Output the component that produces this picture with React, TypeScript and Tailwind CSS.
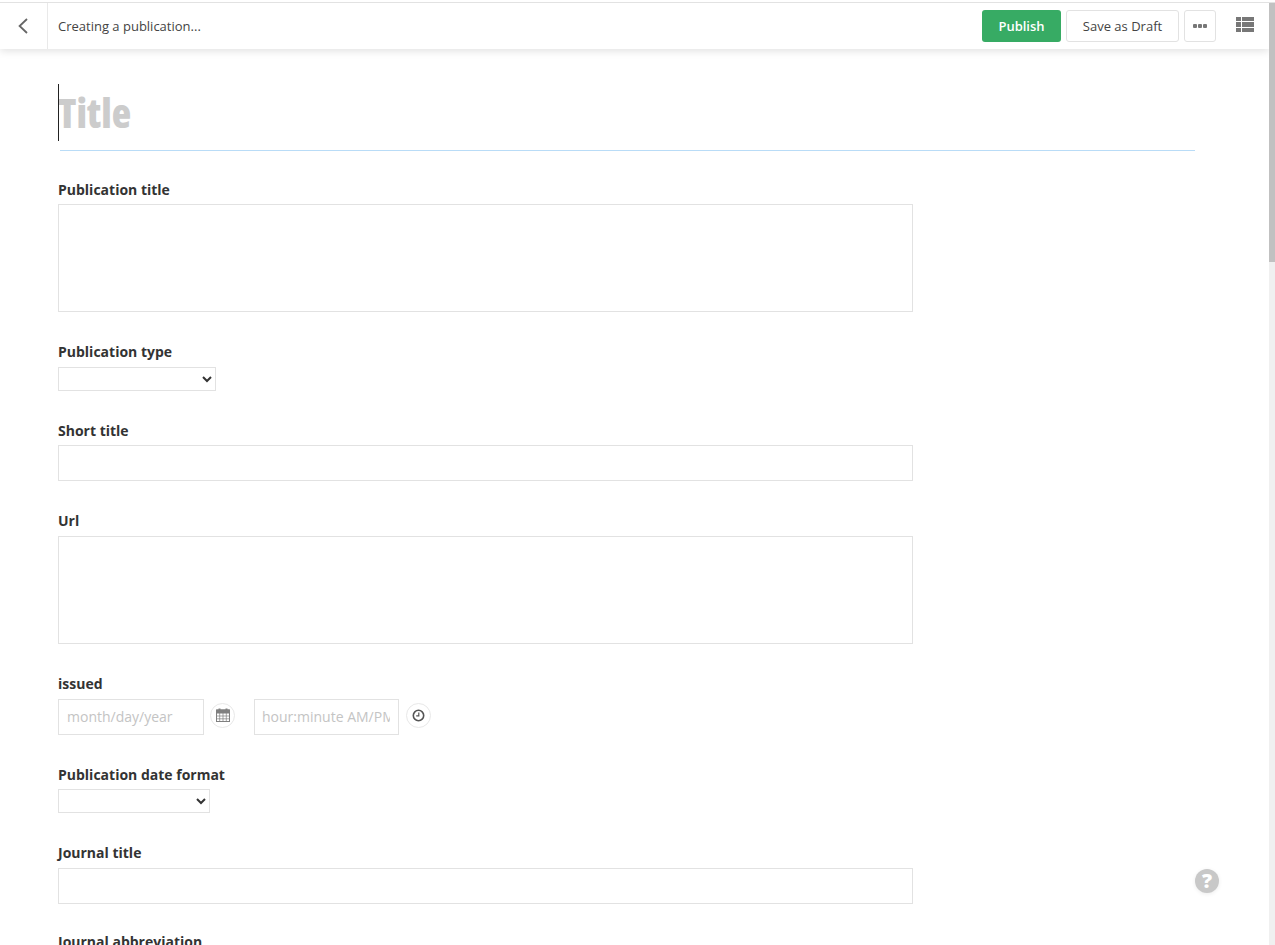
const boxBorder = "block border border-[#e2e2e2] bg-white";

function Label({ text, gap }: { text: string; gap: string }) {
  return <label className={`block h-5 text-[14px] leading-[22px] font-bold text-[#333] ${gap}`}>{text}</label>;
}

function Area() {
  return <textarea className={`${boxBorder} h-[108px] w-[855px] resize-none outline-none`} />;
}

function Line() {
  return <input className={`${boxBorder} h-9 w-[855px] outline-none`} />;
}

function Select({ width }: { width: string }) {
  return <select className={`block h-6 border border-[#e2e2e2] bg-white text-[13px] outline-none ${width}`} />;
}

function CalendarGlyph() {
  return (
    <svg className="mb-[2px]" width="14" height="14" viewBox="0 0 14 14" fill="none" stroke="#808080" strokeWidth="1">
      <rect x="0.5" y="2" width="13" height="11.5" fill="#fff" />
      <path d="M0.5 2h13v3h-13z" fill="#808080" />
      <path d="M3.5 .5v3M10.5 .5v3" strokeWidth="2" />
      <path d="M3.7 5v8.5M7 5v8.5M10.3 5v8.5M.5 8h13M.5 10.8h13" strokeWidth=".7" />
    </svg>
  );
}

function ClockGlyph() {
  return (
    <svg width="13" height="13" viewBox="0 0 13 13" fill="none" stroke="#555">
      <circle cx="6.5" cy="6.5" r="5.2" strokeWidth="1.6" />
      <path d="M6.8 3.4v3.4H4.2" strokeWidth="1.2" />
    </svg>
  );
}

function RoundIcon({ children }: { children: React.ReactNode }) {
  return (
    <span className="mt-1 flex h-[25px] w-[25px] items-center justify-center rounded-full border border-[#e8e8e8] bg-white">
      {children}
    </span>
  );
}

export default function App() {
  return (
    <div className="relative flex h-[945px] w-[1275px] flex-col overflow-hidden bg-white font-['Open_Sans','Noto_Sans',sans-serif] text-[#333]">
      <div className="h-[3px] shrink-0 border-b border-[#e2e2e2] bg-white" />
      <div className="flex min-h-0 flex-1">
        <div className="relative min-w-0 flex-1 overflow-hidden">
          <header className="relative z-10 flex h-[46px] items-center bg-white shadow-[0_2px_8px_rgba(0,0,0,0.12)]">
            <button className="flex h-full w-12 items-center justify-center border-r border-[#e9e9e9] pr-[2px] pb-[1px]">
              <svg width="10" height="16" viewBox="0 0 10 16" fill="none">
                <path d="M9 1 1.6 8 9 15" stroke="#666" strokeWidth="1.8" />
              </svg>
            </button>
            <span className="ml-[10px] pt-[2px] text-[13px] text-[#444]">Creating a publication...</span>
            <div className="ml-auto flex items-center">
              <button className="h-8 w-[79px] rounded-[3px] bg-[#37ab64] pt-[2px] text-[13px] font-semibold text-white">Publish</button>
              <button className="ml-[5px] h-8 w-[113px] rounded-[3px] border border-[#e2e2e2] bg-white pt-[2px] text-[13px] text-[#444]">Save as Draft</button>
              <button className="ml-[5px] flex h-8 w-8 items-center justify-center gap-[1px] rounded-[3px] border border-[#e2e2e2] bg-white pb-[1px]">
                <span className="h-[4px] w-[4px] rounded-[1px] bg-[#777]" />
                <span className="h-[4px] w-[4px] rounded-[1px] bg-[#777]" />
                <span className="h-[4px] w-[4px] rounded-[1px] bg-[#777]" />
              </button>
              <button className="mr-[15px] mb-[3px] ml-[20px] grid h-[15px] w-[18px] grid-cols-[5px_12px] grid-rows-3 gap-[1px]">
                <span className="bg-[#777]" /><span className="bg-[#777]" />
                <span className="bg-[#777]" /><span className="bg-[#777]" />
                <span className="bg-[#777]" /><span className="bg-[#777]" />
              </button>
            </div>
          </header>

          <main className="pl-[58px]">
            <div className="relative mt-[35px] h-[67px] w-[1137px]">
              <span className="absolute left-0 top-0 h-[57px] w-px bg-[#222]" />
              <span className="block h-[57px] text-[40px] leading-[57px] font-extrabold text-[#cccccc] [font-stretch:75%]">Title</span>
              <div className="absolute right-0 bottom-0 left-[2px] h-px bg-[#b9dcf7]" />
            </div>
            <div className="mt-[28px]">
              <Label text="Publication title" gap="mb-[5px]" />
              <Area />
            </div>
            <div className="mt-[29px]">
              <Label text="Publication type" gap="mb-[6px]" />
              <Select width="w-[158px]" />
            </div>
            <div className="mt-[29px]">
              <Label text="Short title" gap="mb-[5px]" />
              <Line />
            </div>
            <div className="mt-[29px]">
              <Label text="Url" gap="mb-[6px]" />
              <Area />
            </div>
            <div className="mt-[29px]">
              <Label text="issued" gap="mb-[6px]" />
              <div className="flex items-start">
                <input placeholder="month/day/year" className={`${boxBorder} h-9 w-[146px] px-2 pb-[2px] text-[14px] outline-none placeholder:text-[#c4c4c4]`} />
                <span className="ml-[6px]"><RoundIcon><CalendarGlyph /></RoundIcon></span>
                <input placeholder="hour:minute AM/PM" className={`${boxBorder} ml-[19px] h-9 w-[145px] pr-2 pb-[2px] pl-[7px] text-[14px] outline-none placeholder:text-[#c4c4c4]`} />
                <span className="ml-[7px]"><RoundIcon><ClockGlyph /></RoundIcon></span>
              </div>
            </div>
            <div className="mt-[29px]">
              <Label text="Publication date format" gap="mb-[5px]" />
              <Select width="w-[152px]" />
            </div>
            <div className="mt-[29px]">
              <Label text="Journal title" gap="mb-[6px]" />
              <Line />
            </div>
            <div className="mt-[27px]">
              <Label text="Journal abbreviation" gap="mb-[6px]" />
            </div>
          </main>
          <span className="absolute left-[1195px] top-[866px] flex h-6 w-6 items-center justify-center rounded-full bg-[#c8c8c8] text-[20px] leading-none font-extrabold text-white shadow-[0_1px_4px_rgba(0,0,0,0.08)]">?</span>
        </div>
        <div className="w-[6px] shrink-0 bg-[#f0f0f0]">
          <div className="h-[259px] w-full bg-[#c1c1c1]" />
        </div>
      </div>
    </div>
  );
}
